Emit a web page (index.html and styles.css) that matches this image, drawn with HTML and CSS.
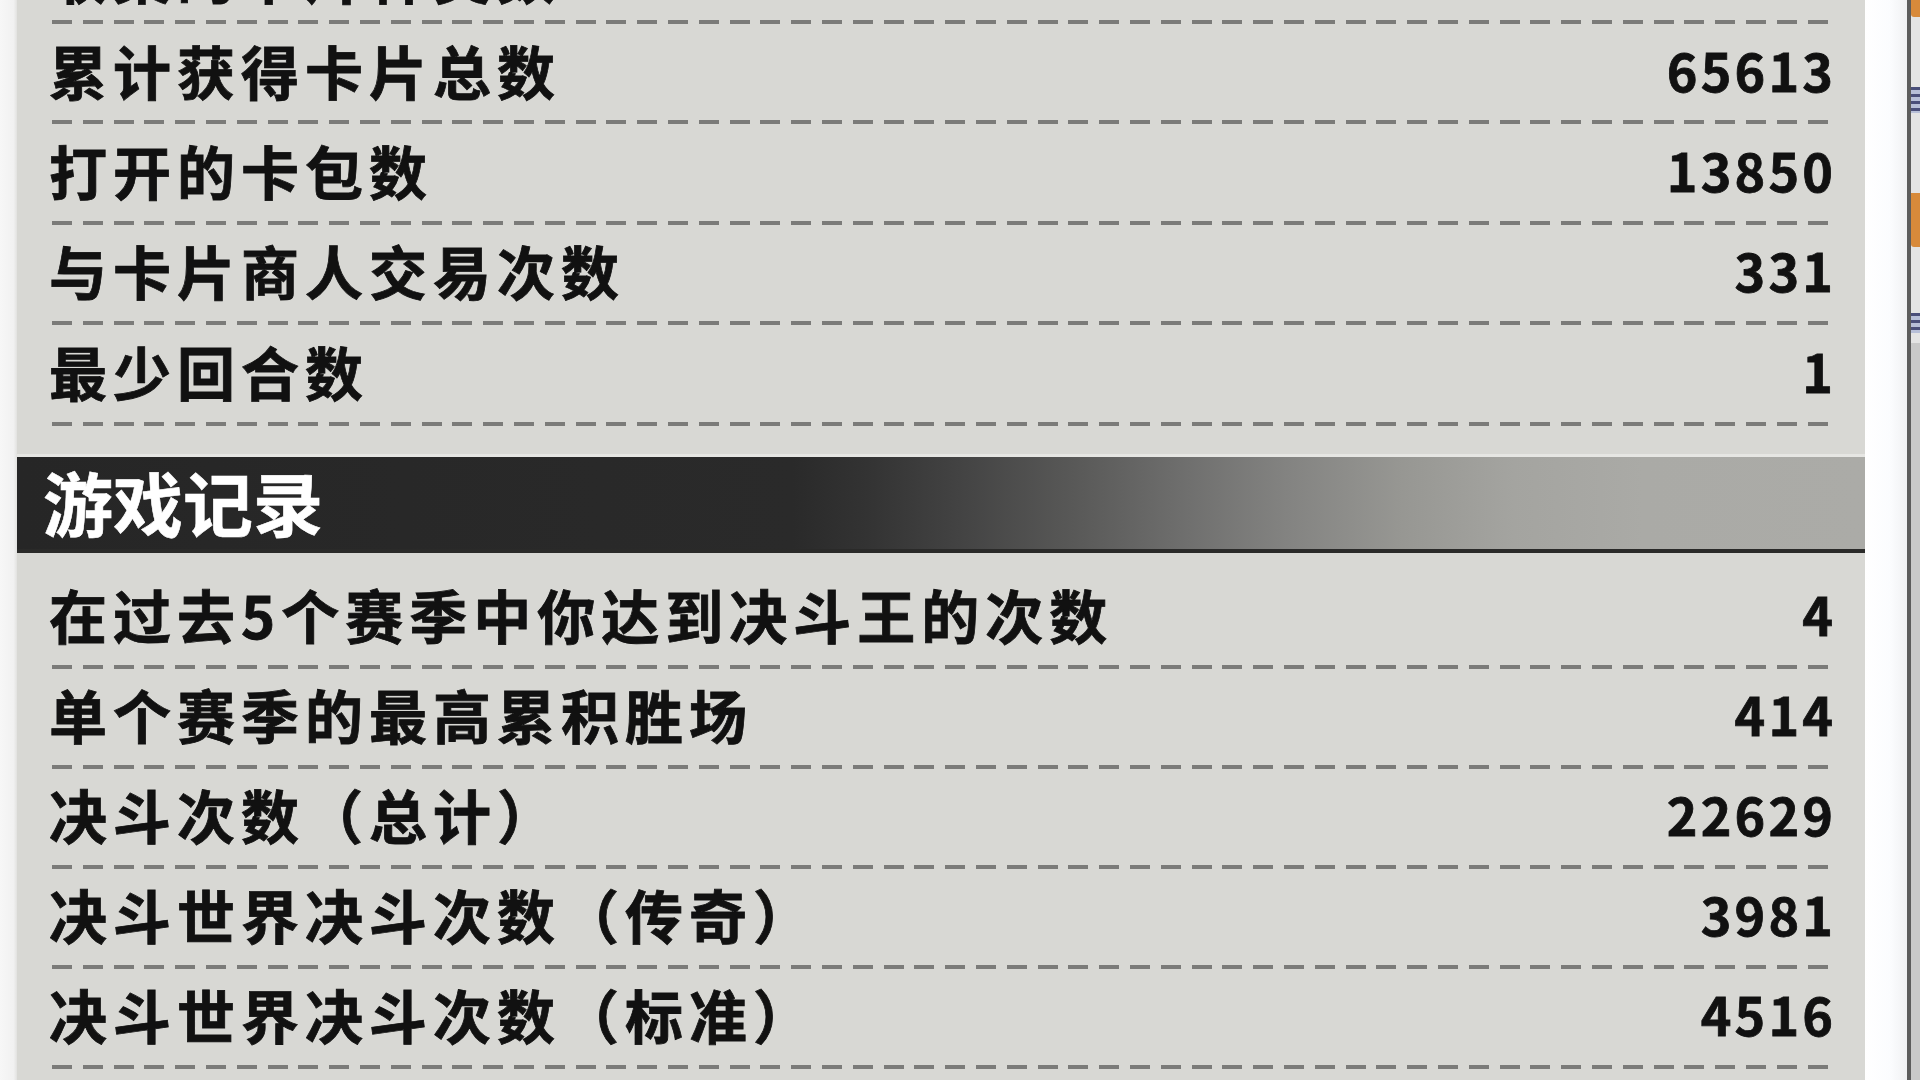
FILE: index.html
```html
<!DOCTYPE html>
<html lang="zh-CN">
<head>
<meta charset="utf-8">
<title>游戏记录</title>
<link rel="stylesheet" href="styles.css">
</head>
<body>
<div class="screen">
  <div class="gutter-left"></div>
  <main class="panel">
    <section class="stats stats-top">
      <div class="row row-cut"><span class="label">收集的卡片种类数</span><span class="value">921</span></div>
      <div class="row"><span class="label">累计获得卡片总数</span><span class="value">65613</span></div>
      <div class="row"><span class="label">打开的卡包数</span><span class="value">13850</span></div>
      <div class="row"><span class="label">与卡片商人交易次数</span><span class="value">331</span></div>
      <div class="row"><span class="label">最少回合数</span><span class="value">1</span></div>
    </section>
    <h2 class="bar">游戏记录</h2>
    <section class="stats stats-game">
      <div class="row"><span class="label">在过去5个赛季中你达到决斗王的次数</span><span class="value">4</span></div>
      <div class="row"><span class="label">单个赛季的最高累积胜场</span><span class="value">414</span></div>
      <div class="row"><span class="label">决斗次数（总计）</span><span class="value">22629</span></div>
      <div class="row"><span class="label">决斗世界决斗次数（传奇）</span><span class="value">3981</span></div>
      <div class="row"><span class="label">决斗世界决斗次数（标准）</span><span class="value">4516</span></div>
    </section>
  </main>
  <div class="gutter-right"></div>
  <div class="divider"></div>
  <div class="next-window">
    <span class="frag frag-orange frag-a"></span>
    <span class="frag frag-lines frag-b"></span>
    <span class="frag frag-orange frag-c"></span>
    <span class="frag frag-lines frag-d"></span>
    <span class="frag frag-rest"></span>
  </div>
</div>
</body>
</html>
```
FILE: styles.css
```css
* { box-sizing: border-box; }

html, body {
  margin: 0;
  padding: 0;
  background: #f6f6f6;
}

.screen {
  display: flex;
  width: 1920px;
  height: 1080px;
  overflow: hidden;
  font-family: "Noto Sans CJK SC", "Noto Sans", sans-serif;
}

.gutter-left {
  flex: 0 0 17px;
  background: linear-gradient(to right, #f7f7f7 0%, #f1f1f1 80%, #e2e2e0 100%);
}

.panel {
  flex: 0 0 1848px;
  background: #d8d8d4;
  overflow: hidden;
}

.stats-top {
  margin-top: -76.4px;
}

.stats-game {
  padding-top: 16px;
}

.row {
  display: flex;
  align-items: center;
  justify-content: space-between;
  margin: 0 32px;
  padding: 0 0 9px;
  height: 100px;
  background-image: repeating-linear-gradient(to right, #7b7b79 0 20px, transparent 20px 30.8px);
  background-size: calc(100% - 3px) 4px;
  background-position: 3px 100%;
  background-repeat: no-repeat;
  color: #111111;
}

.stats-top .row {
  height: 100.4px;
}

.stats-top .row-cut {
  padding-bottom: 0;
}

.label {
  font-size: 58px;
  font-weight: 700;
  letter-spacing: 6px;
  line-height: 1;
  white-space: nowrap;
  -webkit-text-stroke: 0.8px #111111;
}

.value {
  font-size: 52px;
  font-weight: 700;
  letter-spacing: 3.2px;
  margin-right: -3.2px;
  line-height: 1;
  -webkit-text-stroke: 0.8px #111111;
}

.bar {
  margin: 31.4px 0 0;
  height: 96px;
  padding: 3px 0 0 26px;
  border-bottom: 4px solid #2a2a29;
  box-shadow: 0 -3px 0 #e6e6e3;
  background: linear-gradient(to right,
    #262626 0%, #2a2a2a 42%, #333333 46%, #434343 51%,
    #585857 57%, #6e6e6d 63%, #848482 69%, #979793 75%,
    #a4a4a0 81%, #aaaaa6 88%, #ababa7 100%);
  color: #ffffff;
  font-size: 70px;
  font-weight: 700;
  line-height: 84px;
  letter-spacing: 0;
  -webkit-text-stroke: 0.6px #ffffff;
}

.gutter-right {
  flex: 0 0 42px;
  background: linear-gradient(to right, #ffffff 0%, #fbfcfe 60%, #f0f1f3 100%);
}

.divider {
  flex: 0 0 4px;
  background: #5c5c5c;
}

.next-window {
  flex: 0 0 9px;
  display: flex;
  flex-direction: column;
  background: #e4e4e4;
}

.frag { display: block; flex: 0 0 auto; }

.frag-orange {
  background: #d88a3a;
  border-radius: 0 0 0 3px;
}

.frag-lines {
  background: repeating-linear-gradient(to bottom, #4a4f7a 0 3px, #b7bfd8 3px 7px);
}

.frag-a { height: 17px; }
.frag-b { height: 26px; margin-top: 70px; }
.frag-c { height: 54px; margin-top: 80px; }
.frag-d { height: 20px; margin-top: 66px; }
.frag-rest { flex: 1 1 auto; margin-top: 10px; background: #c9c9c9; }
```
